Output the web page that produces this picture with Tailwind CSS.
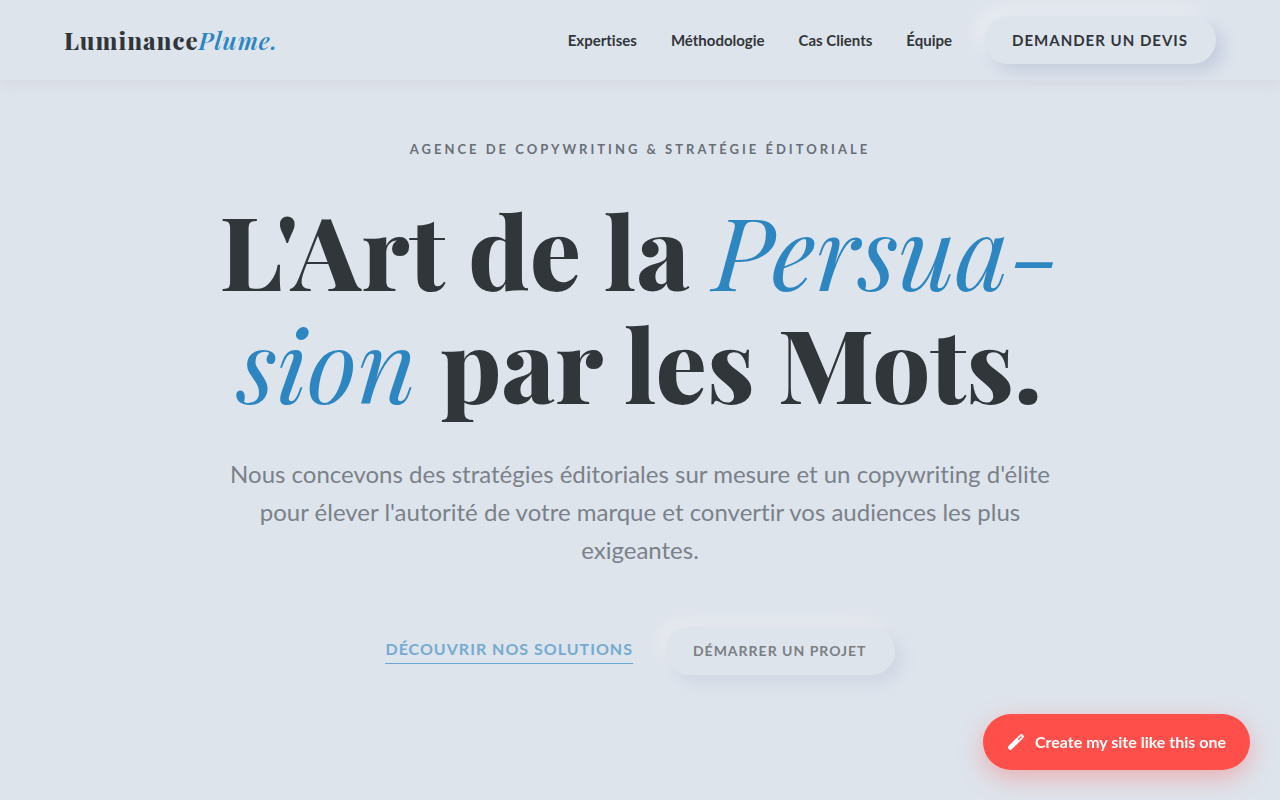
<!DOCTYPE html>
<html lang="fr">
<head>
    <meta charset="UTF-8">
    <meta name="viewport" content="width=device-width, initial-scale=1.0">
    <title>LuminancePlume</title>
    <script src="https://cdn.jsdelivr.net/npm/@tailwindcss/browser@4"></script>
</head>
<body class="bg-[#dee4ec] min-h-screen font-['Lato',sans-serif] [font-variant-ligatures:none] text-[#31363b]">
    <header class="flex items-center justify-between px-16 py-4 shadow-[0_4px_12px_rgba(205,205,210,0.4)]">
        <a href="#" class="font-['Playfair_Display','Liberation_Serif',serif] text-2xl font-extrabold tracking-[1px]">Luminance<em class="font-semibold text-[#2e86c1]">Plume.</em></a>
        <nav class="flex items-center gap-8 text-[15px] font-bold">
            <div class="flex items-center gap-[34px]">
                <a href="#expertises">Expertises</a>
                <a href="#methodologie">Méthodologie</a>
                <a href="#cas-clients">Cas Clients</a>
                <a href="#equipe">Équipe</a>
            </div>
            <button class="h-12 px-7 rounded-full bg-[#dee4ec] font-bold tracking-[1px] shadow-[8px_8px_16px_#c5cede,-8px_-8px_16px_#e9ebf1]">DEMANDER UN DEVIS</button>
        </nav>
    </header>

    <main class="flex flex-col items-center px-16 pt-[59px] text-center">
        <p class="text-[13px] leading-5 font-bold tracking-[3px] text-[#696f77]">AGENCE DE COPYWRITING &amp; STRATÉGIE ÉDITORIALE</p>
        <h1 class="mt-[34px] max-w-[900px] font-['Playfair_Display','Liberation_Serif',serif] text-[102px] leading-[113px] font-extrabold hyphens-manual">L'Art de la <em class="font-normal text-[#2e86c1]">Persua&shy;sion</em> par les Mots.</h1>
        <p class="mt-9 max-w-[840px] text-2xl leading-[38px] text-[#7b8189]">Nous concevons des stratégies éditoriales sur mesure et un copywriting d'élite pour élever l'autorité de votre marque et convertir vos audiences les plus exigeantes.</p>
        <div class="mt-[58px] flex items-center gap-8">
            <a href="#solutions" class="border-b border-[#6aa9d6] pb-1 text-base leading-5 font-bold tracking-[1px] text-[#75abd1]">DÉCOUVRIR NOS SOLUTIONS</a>
            <button class="h-12 px-7 rounded-full bg-[#dee4ec] text-sm font-bold tracking-[1px] text-[#7b7f84] shadow-[8px_8px_16px_#d0d7e3,-8px_-8px_16px_#e7e9ee]">DÉMARRER UN PROJET</button>
        </div>
    </main>

    <a href="#create" class="fixed right-[30px] bottom-[30px] flex h-14 items-center gap-2.5 rounded-full bg-[#ff4f4b] px-6 text-base font-bold text-white shadow-[0_8px_24px_rgba(255,79,75,0.35)]">
        <svg class="size-[18px]" viewBox="0 0 18 18" fill="none" aria-hidden="true">
            <path d="M3.4 14.4 14.4 3.6" stroke="#fff" stroke-width="4.8" stroke-linecap="round"/>
            <path d="M11.6 6.3 14.2 3.8" stroke="#ff4f4b" stroke-width="1.2" stroke-linecap="round"/>
        </svg>
        Create my site like this one
    </a>
</body>
</html>
